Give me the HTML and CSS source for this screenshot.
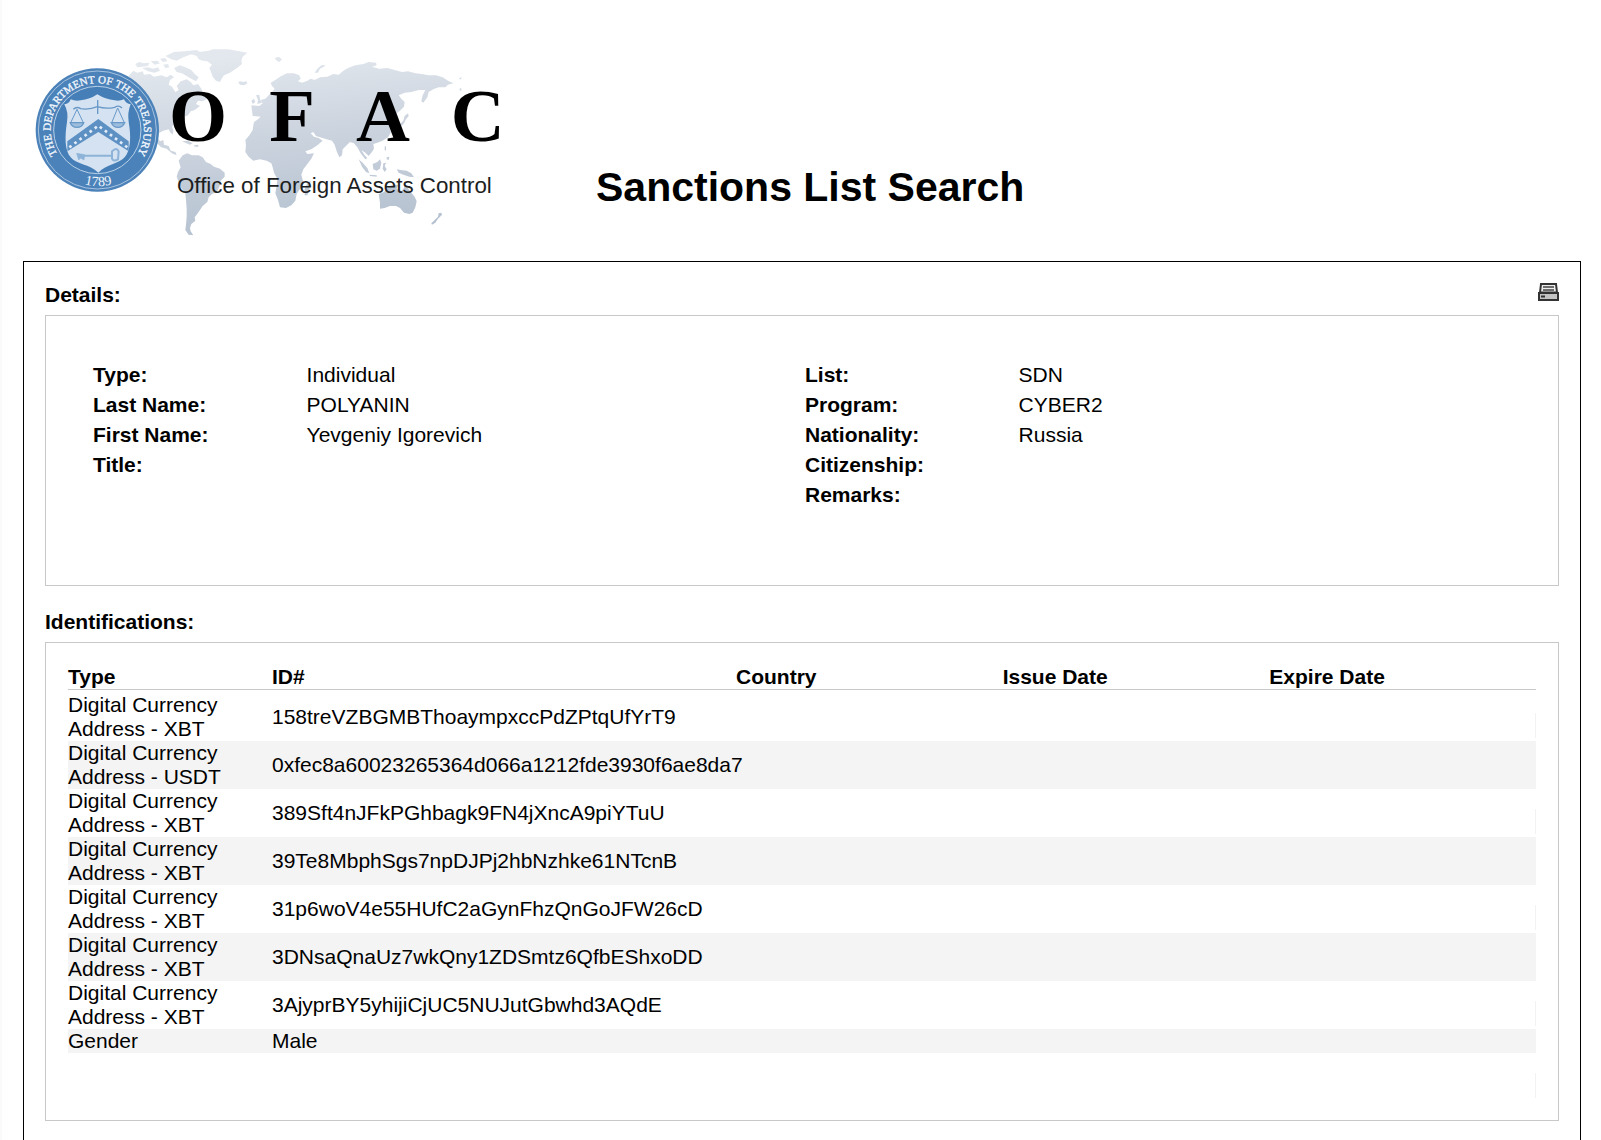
FILE: index.html
```html
<!DOCTYPE html>
<html lang="en">
<head>
<meta charset="utf-8">
<title>Sanctions List Search</title>
<link rel="stylesheet" href="styles.css">
</head>
<body>
<header class="masthead">
  <svg class="logo" viewBox="0 0 1500 630" role="img" aria-label="Office of Foreign Assets Control">
    <defs>
      <linearGradient id="land" gradientUnits="userSpaceOnUse" x1="800" y1="30" x2="860" y2="600">
        <stop offset="0" stop-color="#e3e8ee"/>
        <stop offset=".45" stop-color="#cbd3de"/>
        <stop offset="1" stop-color="#b3c0cf"/>
      </linearGradient>
      <path id="ring" d="M125 360 A140 140 0 1 1 339 360"/>
      <path id="ring-low" d="M132 404 A172 172 0 0 0 338 404"/>
    </defs>
    <!-- world map -->
    <g fill="url(#land)">
      <path d="M325 108L340 92L352 98L368 94L372 104L390 102L402 110L424 106L440 112L452 104L462 112L450 120L446 134L456 140L466 156L476 150L470 138L482 124L500 118L512 126L520 136L534 132L544 146L552 164L562 176L548 184L534 182L528 192L540 198L524 210L512 214L504 226L490 232L478 240L466 248L456 260L460 272L458 284L450 276L446 268L430 272L416 280L412 292L420 304L430 300L432 314L446 318L452 332L466 336L470 346L456 340L440 326L424 322L404 304L390 280L370 200L340 130Z"/>
      <path d="M346 72L358 66L370 70L388 68L384 78L366 80L352 82ZM366 84L384 82L400 86L414 82L420 92L404 98L384 94ZM392 64L412 62L420 70L404 74ZM436 48L462 36L494 34L530 30L540 36L510 44L490 52L470 62L454 58ZM420 56L436 54L442 64L428 66ZM430 74L444 72L448 82L436 84ZM462 84L480 76L496 82L514 90L524 102L536 112L528 124L514 116L500 108L486 100L470 96Z"/>
      <path d="M512 42L536 36L566 32L580 28L624 28L650 32L682 38L668 50L664 62L666 72L654 82L642 90L630 98L612 106L604 118L600 126L588 122L578 110L572 94L568 84L576 74L562 64L548 62L536 58L530 48Z"/>
      <path d="M654 126L662 124L670 126L680 124L682 130L672 136L660 134Z"/>
      <path d="M476 362L488 346L502 340L516 346L536 346L548 352L558 366L572 372L582 380L600 386L614 398L614 410L602 422L598 440L590 456L576 462L566 472L562 486L548 498L540 510L530 524L524 532L526 542L514 552L510 564L512 574L520 586L506 584L496 570L498 554L500 530L500 506L498 480L496 460L484 444L476 426L470 410L474 396L482 382Z"/>
      <path d="M486 304L504 302L518 310L510 314L496 308ZM522 316L534 314L536 320L524 320Z"/>
      <path d="M694 196L718 198L728 190L722 180L736 176L746 166L756 156L764 146L756 138L752 128L766 120L780 110L800 100L822 100L838 106L842 116L834 124L846 128L862 122L872 116L884 120L900 112L922 110L940 102L956 104L970 92L984 84L1006 76L1030 72L1046 66L1068 68L1070 76L1056 80L1078 86L1102 84L1124 90L1146 96L1164 94L1186 100L1206 102L1226 106L1248 106L1268 112L1284 122L1300 130L1284 134L1276 142L1256 142L1240 148L1226 156L1222 172L1210 188L1204 184L1208 166L1216 150L1196 150L1174 156L1154 158L1136 166L1144 176L1154 186L1152 200L1140 212L1130 220L1136 236L1138 248L1130 252L1124 240L1114 236L1104 244L1108 260L1112 278L1104 292L1088 302L1072 308L1060 312L1062 326L1054 338L1046 348L1036 338L1024 330L1034 346L1042 354L1036 358L1022 340L1012 322L1002 310L990 306L980 316L968 328L966 346L958 352L950 334L944 314L936 302L920 298L900 292L888 288L880 276L872 280L882 290L896 294L908 302L892 316L874 328L856 334L862 342L882 340L874 356L862 372L850 388L844 404L850 428L840 446L830 462L826 482L814 496L798 504L780 502L774 480L766 460L770 438L772 416L762 398L758 382L754 370L740 362L720 358L700 362L686 350L676 336L678 316L676 300L688 286L698 270L700 256L702 246L714 238L722 230L698 228Z"/>
      <path d="M862 430L872 422L868 448L862 466L854 466L854 448Z"/>
      <path d="M708 166L718 164L720 178L726 188L712 192L714 180ZM694 182L702 176L706 186L698 192Z"/>
      <path d="M764 54L776 50L786 58L778 66L770 62ZM884 98L892 86L904 76L916 74L912 80L900 86L894 98Z"/>
      <path d="M1140 252L1150 242L1154 228L1164 220L1166 228L1158 238L1152 250L1142 260ZM1094 320L1098 318L1098 332L1094 330ZM1100 352L1108 350L1106 360L1100 358Z"/>
      <path d="M1016 358L1028 368L1042 384L1048 400L1038 396L1026 380ZM1048 404L1070 406L1070 410L1050 408ZM1058 372L1072 366L1080 358L1084 368L1080 386L1070 392L1060 388Z"/>
      <path d="M1090 370L1098 368L1094 378L1100 388L1094 396L1088 386ZM1130 388L1142 390L1160 392L1174 400L1182 412L1168 410L1150 404L1136 398Z"/>
      <path d="M1076 462L1092 456L1100 446L1114 436L1126 434L1134 436L1130 446L1144 454L1152 444L1154 430L1162 442L1172 456L1184 470L1190 484L1186 502L1178 518L1168 522L1152 518L1140 504L1128 498L1110 498L1094 504L1080 506L1080 488Z"/>
      <path d="M1234 550L1244 540L1254 530L1256 520L1264 518L1266 524L1254 536L1246 548L1236 554ZM1318 114L1324 112L1324 118L1318 118ZM1318 146L1324 144L1324 152L1320 152Z"/>
    </g>
    <!-- treasury seal -->
    <circle cx="232" cy="270" r="185" fill="#4b82b9"/>
    <circle cx="232" cy="270" r="177" fill="none" stroke="#a8c4e0" stroke-width="3"/>
    <circle cx="232" cy="270" r="131" fill="#467fb7" stroke="#b9d0e7" stroke-width="3"/>
    <text class="seal-text"><textPath href="#ring" startOffset="50%" text-anchor="middle">THE DEPARTMENT OF THE TREASURY</textPath></text>
    <text class="seal-year"><textPath href="#ring-low" startOffset="50%" text-anchor="middle">1789</textPath></text>
    <path fill="#d4e2f1" d="M152 178Q166 184 182 181Q210 178 232 163Q256 178 284 181Q298 184 312 178Q318 191 332 193Q322 216 326 246C334 290 332 332 314 352C296 372 260 372 235 398C208 372 170 374 152 352C134 332 134 290 141 246Q146 216 133 193Q148 191 152 178Z"/>
    <path fill="#5d90c3" d="M235 237L326 304L326 334L235 276L142 334L142 304Z"/>
    <path fill="none" stroke="#e4eefa" stroke-width="8" stroke-dasharray="8 11" d="M148 322L235 257L322 322"/>
    <g fill="none" stroke="#6999c8" stroke-width="4">
      <path d="M160 208Q170 198 182 206Q208 210 232 200Q258 208 284 202Q296 194 306 204M233 180V222" />
      <path stroke-width="3" d="M171 208L153 246M171 208L189 246M293 204L276 246M293 204L312 246"/>
      <path fill="#9dbddd" d="M151 248H191Q186 262 171 262Q156 262 151 248ZM274 248H314Q308 262 294 262Q280 262 274 248Z"/>
    </g>
    <g fill="none" stroke="#8eb3d8" stroke-width="6">
      <path d="M176 347H274"/>
      <path d="M276 334Q290 320 296 334L294 358Q280 366 276 356Z"/>
      <path fill="#8eb3d8" stroke-width="2" d="M170 340L194 344L192 360L182 354L176 360Z"/>
    </g>
    <!-- wordmark -->
    <g class="letters">
      <text x="447" y="304">O</text>
      <text x="748" y="304">F</text>
      <text x="1008" y="304">A</text>
      <text x="1292" y="304">C</text>
    </g>
    <text class="tagline" x="471" y="458">Office of Foreign Assets Control</text>
  </svg>
  <h1 class="title">Sanctions List Search</h1>
</header>

<main class="panel">
  <section class="section">
    <div class="section-head">
      <h2 class="section-title">Details:</h2>
      <button class="print" type="button" aria-label="Print">
        <svg viewBox="0 0 21 18" width="21" height="18" aria-hidden="true">
          <path d="M3 1H18L19 9.500H2Z" fill="#eee" stroke="#333" stroke-width="2"/>
          <path d="M5 4H16M5 7H16" stroke="#444" stroke-width="1.500"/>
          <path d="M1 10H20V17H1Z" fill="#c4c4c4" stroke="#333" stroke-width="2"/>
          <path d="M3 13.500H7" stroke="#333" stroke-width="2"/>
        </svg>
      </button>
    </div>
    <div class="box facts">
      <dl class="fact-list">
        <dt>Type:</dt><dd>Individual</dd>
        <dt>Last Name:</dt><dd>POLYANIN</dd>
        <dt>First Name:</dt><dd>Yevgeniy Igorevich</dd>
        <dt>Title:</dt><dd></dd>
      </dl>
      <dl class="fact-list">
        <dt>List:</dt><dd>SDN</dd>
        <dt>Program:</dt><dd>CYBER2</dd>
        <dt>Nationality:</dt><dd>Russia</dd>
        <dt>Citizenship:</dt><dd></dd>
        <dt>Remarks:</dt><dd></dd>
      </dl>
    </div>
  </section>

  <section class="section">
    <div class="section-head">
      <h2 class="section-title">Identifications:</h2>
    </div>
    <div class="box ids">
      <table class="id-table">
        <colgroup><col class="col-type"><col class="col-id"><col><col><col></colgroup>
        <thead>
          <tr><th scope="col">Type</th><th scope="col">ID#</th><th scope="col">Country</th><th scope="col">Issue Date</th><th scope="col">Expire Date</th></tr>
        </thead>
        <tbody>
          <tr><td>Digital Currency Address - XBT</td><td>158treVZBGMBThoaympxccPdZPtqUfYrT9</td><td></td><td></td><td></td></tr>
          <tr><td>Digital Currency Address - USDT</td><td>0xfec8a60023265364d066a1212fde3930f6ae8da7</td><td></td><td></td><td></td></tr>
          <tr><td>Digital Currency Address - XBT</td><td>389Sft4nJFkPGhbagk9FN4jXncA9piYTuU</td><td></td><td></td><td></td></tr>
          <tr><td>Digital Currency Address - XBT</td><td>39Te8MbphSgs7npDJPj2hbNzhke61NTcnB</td><td></td><td></td><td></td></tr>
          <tr><td>Digital Currency Address - XBT</td><td>31p6woV4e55HUfC2aGynFhzQnGoJFW26cD</td><td></td><td></td><td></td></tr>
          <tr><td>Digital Currency Address - XBT</td><td>3DNsaQnaUz7wkQny1ZDSmtz6QfbEShxoDD</td><td></td><td></td><td></td></tr>
          <tr><td>Digital Currency Address - XBT</td><td>3AjyprBY5yhijiCjUC5NUJutGbwhd3AQdE</td><td></td><td></td><td></td></tr>
          <tr><td>Gender</td><td>Male</td><td></td><td></td><td></td></tr>
          <tr class="spacer"><td></td><td></td><td></td><td></td><td></td></tr>
        </tbody>
      </table>
    </div>
  </section>
</main>
</body>
</html>
```
FILE: styles.css
```css
* {
  box-sizing: border-box;
}

body {
  margin: 0;
  border-left: 2px solid #fafafa;
  background: #fff;
  color: #000;
  font: 21px/24px "Liberation Sans", Arial, sans-serif;
}

h1, h2, dl, dd {
  margin: 0;
}

.masthead {
  display: flex;
  align-items: flex-end;
  gap: 76px;
  padding: 40px 20px 11px 18px;
}

.logo {
  flex: none;
  width: 500px;
  height: 210px;
}

.letters {
  font: bold 224px "Liberation Serif", "Times New Roman", serif;
}

.tagline {
  font: 67px "Liberation Sans", Arial, sans-serif;
  fill: #1c1e22;
}

.seal-text {
  font: 33px "Liberation Serif", "Times New Roman", serif;
  fill: #f0f6fd;
  stroke: #f0f6fd;
  stroke-width: 1px;
}

.seal-year {
  font: 42px "Liberation Serif", "Times New Roman", serif;
  fill: #f0f6fd;
}

.title {
  padding-bottom: 39px;
  font-size: 41px;
  line-height: 48px;
}

.panel {
  margin: 0 20px 0 21px;
  padding: 21px 21px 20px;
  border: 1px solid #000;
  border-bottom: 0;
}

.section + .section {
  margin-top: 24px;
}

.section-head {
  display: flex;
  justify-content: space-between;
  align-items: flex-start;
  margin-bottom: 8px;
}

.section-title {
  font-size: 21px;
  line-height: 24px;
}

.print {
  display: flex;
  padding: 0;
  border: 0;
  background: none;
  cursor: pointer;
}

.box {
  border: 1px solid #c8c8c8;
}

.facts {
  display: flex;
  align-items: flex-start;
  padding: 44px 41px 75px 47px;
}

.fact-list {
  display: grid;
  flex: 1;
  grid-template-columns: 30% 1fr;
  grid-auto-rows: 30px;
  line-height: 30px;
}

.fact-list dt {
  font-weight: bold;
}

.ids {
  padding: 22px 22px 19px;
}

.id-table {
  width: 100%;
  table-layout: fixed;
  border-spacing: 0;
  border-collapse: separate;
}

.col-type {
  width: 204px;
}

.col-id {
  width: 464px;
}

.id-table th {
  padding: 0;
  border-bottom: 1px solid #c8c8c8;
  text-align: left;
}

.id-table tbody::before {
  content: "";
  display: table-row;
  height: 3px;
}

.id-table td {
  padding: 0;
  vertical-align: middle;
}

.id-table td:first-child {
  padding-right: 36px;
}

.id-table td:nth-child(2) {
  white-space: nowrap;
}

.id-table tbody tr:nth-child(even) {
  background: #f4f4f4;
}

.id-table tbody tr:nth-child(odd) td:last-child {
  background: linear-gradient(#f2f2f2, #f2f2f2) right bottom 3px / 1px 25px no-repeat;
}

.spacer td {
  height: 48px;
}
```
